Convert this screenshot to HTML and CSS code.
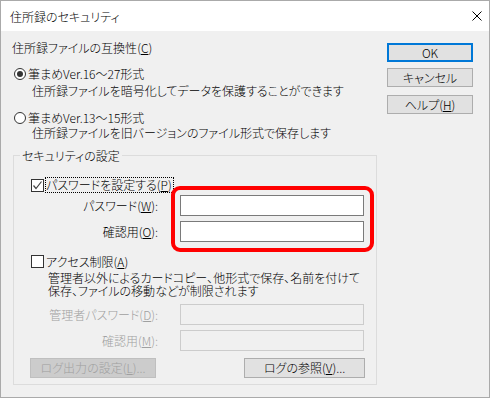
FILE: index.html
```html
<!DOCTYPE html>
<html lang="ja">
<head>
  <meta charset="UTF-8" />
  <title>住所録のセキュリティ</title>
  <link rel="stylesheet" href="styles.css">
</head>
<body>
  <div class="window">
    <div class="titlebar">
      <span class="title">住所録のセキュリティ</span>
      <svg class="close" width="10" height="10" viewBox="0 0 10 10">
        <path d="M0.5 0.5 L9.5 9.5 M9.5 0.5 L0.5 9.5" stroke="#000" stroke-width="1" fill="none" />
      </svg>
    </div>
    <div class="content">
      <div class="main">
        <div class="heading">住所録ファイルの互換性(<u>C</u>)</div>
        <label class="option first"><span class="radio checked"></span>筆まめVer.16～27形式</label>
        <div class="desc">住所録ファイルを暗号化してデータを保護することができます</div>
        <label class="option second"><span class="radio"></span>筆まめVer.13～15形式</label>
        <div class="desc last">住所録ファイルを旧バージョンのファイル形式で保存します</div>

        <fieldset class="group">
          <legend>セキュリティの設定</legend>
          <label class="check pw-check">
            <span class="box">
              <svg width="11" height="11" viewBox="0 0 11 11"><path d="M1.5 5.5 L4 8.5 L9.5 1.5" stroke="#444" stroke-width="1.2" fill="none" /></svg>
            </span>
            <span class="focus">パスワードを設定する(<u>P</u>)</span>
          </label>
          <div class="fields pw-fields">
            <span class="field-label">パスワード(<u>W</u>):</span>
            <input class="input" type="password">
            <span class="field-label">確認用(<u>O</u>):</span>
            <input class="input" type="password">
            <div class="highlight"></div>
          </div>
          <label class="check access-check"><span class="box"></span>アクセス制限(<u>A</u>)</label>
          <div class="note">管理者以外によるカードコピー、他形式で保存、名前を付けて<br>保存、ファイルの移動などが制限されます</div>
          <div class="fields admin-fields disabled">
            <span class="field-label">管理者パスワード(<u>D</u>):</span>
            <input class="input" type="password" disabled>
            <span class="field-label">確認用(<u>M</u>):</span>
            <input class="input" type="password" disabled>
          </div>
          <div class="log-buttons">
            <button class="btn log-setup" disabled>ログ出力の設定(<u>L</u>)...</button>
            <button class="btn log-view">ログの参照(<u>V</u>)...</button>
          </div>
        </fieldset>
      </div>
      <div class="side">
        <button class="btn default">OK</button>
        <button class="btn cancel">キャンセル</button>
        <button class="btn help">ヘルプ(<u>H</u>)</button>
      </div>
    </div>
  </div>
</body>
</html>
```

FILE: styles.css
```css
* { box-sizing: border-box; margin: 0; padding: 0; }
body {
  font-family: "Noto Sans CJK JP", "Noto Sans", sans-serif;
  font-size: 12px;
  font-weight: 300;
  color: #000;
  background: #fff;
  font-feature-settings: "palt";
}
u { text-underline-offset: 1px; }
.window {
  width: 490px;
  height: 398px;
  border: 1px solid #aaa;
  background: #f0f0f0;
}
.titlebar {
  height: 30px;
  background: #fff;
  display: flex;
  align-items: center;
  justify-content: space-between;
  padding: 0 7px 0 9px;
  line-height: 15px;
}
.content {
  display: flex;
}
.main {
  width: 376px;
  padding: 9px 0 0 11px;
}
.heading { line-height: 15px; }
.option {
  display: flex;
  align-items: center;
  line-height: 14px;
  padding-left: 2px;
}
.option.first { margin-top: 12px; }
.option.second { margin-top: 13px; }
.radio {
  width: 12px;
  height: 12px;
  border: 1px solid #333;
  border-radius: 50%;
  background: #fff;
  margin-right: 2px;
  display: flex;
  align-items: center;
  justify-content: center;
}
.radio.checked::after {
  content: "";
  width: 6px;
  height: 6px;
  border-radius: 50%;
  background: #333;
}
.desc {
  line-height: 14px;
  margin: 3px 0 0 20px;
}
.desc.last { margin-top: 1px; }

.group {
  margin: 8px 0 0 1px;
  border: 1px solid #dcdcdc;
  padding: 0 0 6px 0;
}
.group legend {
  margin-left: 6px;
  padding: 0 2px;
  line-height: 15px;
}
.check {
  display: flex;
  align-items: center;
  margin-left: 17px;
  line-height: 15px;
}
.pw-check { margin-top: 14px; }
.access-check { margin-top: 12px; }
.box {
  width: 13px;
  height: 13px;
  border: 1px solid #333;
  background: #fff;
  margin-right: 2px;
  display: flex;
  align-items: center;
  justify-content: center;
}
.pw-check .box { margin-right: 1px; }
.focus {
  border: 1px dotted #000;
  line-height: 14px;
  padding-right: 1px;
}
.fields {
  display: grid;
  grid-template-columns: 144px 184px;
  column-gap: 22px;
  row-gap: 5px;
  align-items: center;
  position: relative;
}
.pw-fields { margin-top: 2px; }
.admin-fields { margin-top: 7px; }
.field-label {
  text-align: right;
  line-height: 15px;
}
.input {
  height: 21px;
  border: 1px solid #7a7a7a;
  background: #fff;
  font: inherit;
  outline: none;
}
.disabled .field-label { color: #a0a0a0; }
.disabled .input {
  border-color: #cccccc;
  background: #f0f0f0;
}
.highlight {
  position: absolute;
  left: 157px;
  top: -9px;
  width: 203px;
  height: 66px;
  border: 4px solid #ff0000;
  border-radius: 9px;
  pointer-events: none;
}
.note {
  line-height: 13px;
  margin: 2px 0 0 34px;
}
.log-buttons {
  display: flex;
  justify-content: space-between;
  padding: 0 11px 0 16px;
  margin-top: 7px;
}
.btn {
  font: inherit;
  color: #000;
  background: #e1e1e1;
  border: 1px solid #adadad;
  height: 20px;
  line-height: 16px;
  padding: 0;
}
.btn:disabled {
  background: #cccccc;
  border-color: #bfbfbf;
  color: #a0a0a0;
}
.log-setup { width: 126px; }
.log-view { width: 121px; }
.side {
  margin-left: 10px;
  padding-top: 12px;
  display: flex;
  flex-direction: column;
  width: 86px;
}
.side .btn { height: 19px; line-height: 15px; }
.btn.default { border: 2px solid #0078d7; line-height: 13px; }
.btn.cancel { margin-top: 6px; }
.btn.help { margin-top: 8px; }
```
